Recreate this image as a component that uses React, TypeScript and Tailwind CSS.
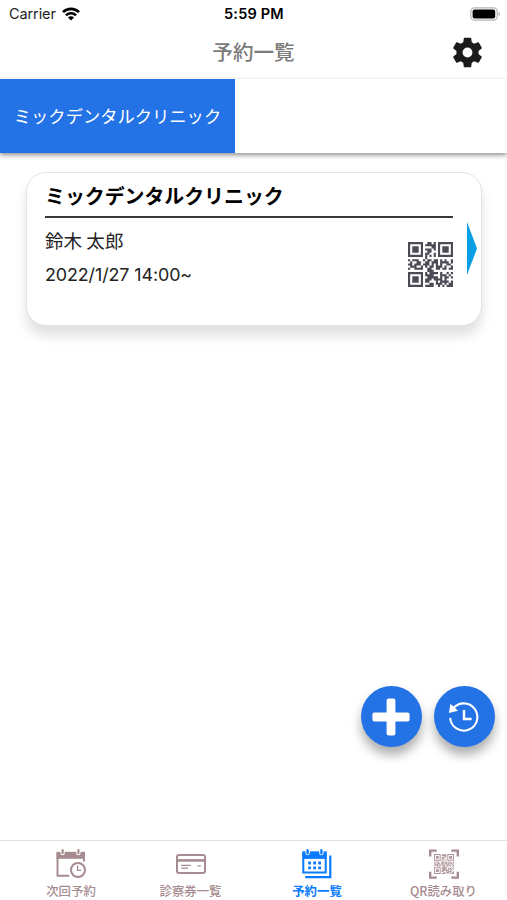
import React from "react";
import clsx from "clsx";

const CLINIC = "ミックデンタルクリニック";

const QR_ROWS = [
  "#######..##.#.#######",
  "#.....#.#####.#.....#",
  "#.###.#....##.#.###.#",
  "#.###.#.###.#.#.###.#",
  "#.###.#..##...#.###.#",
  "#.....#.##..#.#.....#",
  "#######.#.#.#.#######",
  "........#............",
  "#.###..#.##.##.#.#..#",
  ".#..##..##.###.####.#",
  "##.###.###.#.#.#..##.",
  ".###..#.#.##.###.#..#",
  "#..####..##..##.##.##",
  ".........###.........",
  "#######.#.####.#..#.#",
  "#.....#.####...###.#.",
  "#.###.#..#####.#.##.#",
  "#.###.#.###.####.#...",
  "#.###.#.##...#.####.#",
  "#.....#...##.###.#.##",
  "#######.####..#.#.###",
];

const QrCode = ({ className }) => {
  const d = QR_ROWS.map((row, y) =>
    [...row].map((c, x) => (c === "#" ? `M${x} ${y}h1v1h-1z` : "")).join("")
  ).join("");

  return (
    <svg className={className} viewBox="0 0 21 21" fill="currentColor">
      <path d={d} />
    </svg>
  );
};

const WifiIcon = () => (
  <svg className="h-[14px] w-[18px]" viewBox="0 0 18 14" fill="none">
    <path d="M1 5.2a11.3 11.3 0 0 1 16 0" stroke="#000" strokeWidth="2.6" />
    <path d="M3.9 8.3a7.2 7.2 0 0 1 10.2 0" stroke="#000" strokeWidth="2.4" />
    <path d="M9 13.6 6 10.6a4.2 4.2 0 0 1 6 0z" fill="#000" />
  </svg>
);

const BatteryIcon = () => (
  <svg className="h-[14px] w-[31px]" viewBox="0 0 31 14">
    <rect x=".8" y=".8" width="26.4" height="12.4" rx="3.6" fill="#fff" stroke="#b5b5b5" strokeWidth="1.2" />
    <rect x="2.6" y="2.4" width="22.6" height="9.2" rx="2" />
    <path d="M28.6 4.8c1.8.7 1.8 3.7 0 4.4z" fill="#aaa" />
  </svg>
);

const GearIcon = () => (
  <svg className="h-[37px] w-[37px]" viewBox="0 0 24 24" fill="#1b1b1b">
    <path d="M19.14 12.94c.04-.3.06-.61.06-.94 0-.32-.02-.64-.07-.94l2.03-1.58c.18-.14.23-.41.12-.61l-1.92-3.32c-.12-.22-.37-.29-.59-.22l-2.39.96c-.5-.38-1.03-.7-1.62-.94l-.36-2.54c-.04-.24-.24-.41-.48-.41h-3.84c-.24 0-.43.17-.47.41l-.36 2.54c-.59.24-1.13.57-1.62.94l-2.39-.96c-.22-.08-.47 0-.59.22L2.74 8.87c-.12.21-.08.47.12.61l2.03 1.58c-.05.3-.09.63-.09.94s.02.64.07.94l-2.03 1.58c-.18.14-.23.41-.12.61l1.92 3.32c.12.22.37.29.59.22l2.39-.96c.5.38 1.03.7 1.62.94l.36 2.54c.05.24.24.41.48.41h3.84c.24 0 .44-.17.47-.41l.36-2.54c.59-.24 1.13-.56 1.62-.94l2.39.96c.22.08.47 0 .59-.22l1.92-3.32c.12-.22.07-.47-.12-.61l-2.01-1.58zM12 15.2a3.2 3.2 0 1 1 0-6.4 3.2 3.2 0 0 1 0 6.4z" />
  </svg>
);

const PlusIcon = () => (
  <svg className="h-[38px] w-[38px]" viewBox="0 0 38 38" fill="#fff">
    <rect x="14.6" y=".4" width="8.8" height="37.2" rx="2" />
    <rect x=".4" y="14.6" width="37.2" height="8.8" rx="2" />
  </svg>
);

const HistoryIcon = () => (
  <svg className="h-[32px] w-[32px]" viewBox="0 0 32 32" fill="none" stroke="#fff" strokeWidth="2.1">
    <path d="M2.2 17A13.6 13.6 0 1 0 5 7.7" />
    <path d="M2.4 2.8.9 12l9.2-2.2z" fill="#fff" stroke="none" />
    <path d="M16 9v9h7.6" strokeWidth="2.4" />
  </svg>
);

const NextVisitIcon = () => (
  <svg className="h-[30px] w-[30px]" viewBox="0 0 30 30" fill="none" stroke="currentColor">
    <path d="M.5 2.8h28.4v7H.5z" fill="currentColor" stroke="none" />
    <path d="M1.5 4v22.7h11.8M28 4v8.6" strokeWidth="1.9" />
    <path d="M6.6.4v3.6M22.4.4v3.6" stroke="#fff" strokeWidth="4.4" strokeLinecap="round" />
    <path d="M6.6 1.2v3M22.4 1.2v3" strokeWidth="2.2" strokeLinecap="round" />
    <circle cx="22" cy="21" r="8.8" fill="#fff" stroke="none" />
    <circle cx="22" cy="21" r="7" strokeWidth="2" />
    <path d="M21.6 16.6v4.8h3.6" strokeWidth="1.3" />
  </svg>
);

const CardIcon = () => (
  <svg className="h-[30px] w-[30px]" viewBox="0 0 30 30" fill="none" stroke="currentColor">
    <rect x="1" y="6" width="28" height="18" rx="2" strokeWidth="2" />
    <path d="M1 11.4h28" strokeWidth="2.6" />
    <path d="M5.2 16.3h9.6M5.2 19.2h7M21.4 16.8h3.4" strokeWidth="1.2" />
  </svg>
);

const CalendarIcon = () => (
  <svg className="h-[30px] w-[30px]" viewBox="0 0 30 30" fill="none" stroke="currentColor">
    <path d="M1.3 3.6h22.4v20H1.3z" strokeWidth="2" />
    <path d="M.4 2.7h24.2v7.2H.4z" fill="currentColor" stroke="none" />
    <path d="M5.6.4v3.6M19.4.4v3.6" stroke="#fff" strokeWidth="4.4" strokeLinecap="round" />
    <path d="M5.6 1.2v3M19.4 1.2v3" strokeWidth="2.4" strokeLinecap="round" />
    <path d="M28.3 6.4v21.8H3.2" strokeWidth="2.2" />
    <path d="M6.2 14h12.8M6.2 18.9h12.8" strokeWidth="2.8" strokeDasharray="2.8 2.2" />
  </svg>
);

const ScanIcon = () => (
  <span className="relative flex h-[30px] w-[30px] items-center justify-center">
    <svg className="absolute inset-0 h-[30px] w-[30px]" viewBox="0 0 30 30" fill="none" stroke="currentColor" strokeWidth="2.4">
      <path d="M1.2 7.4V1.6h6.5M22.3 1.6h6.5v5.8M28.8 22.8v5.8h-6.5M7.7 28.6H1.2v-5.8" />
    </svg>
    <QrCode className="h-5 w-5 opacity-90" />
  </span>
);

const StatusBar = () => (
  <div className="grid h-[27px] grid-cols-3 items-center pr-[6px] pl-[9px] font-['Inter'] text-[14.5px]">
    <div className="flex items-center gap-[6px] text-[#222]">
      <span className="tracking-[-0.1px]">Carrier</span>
      <WifiIcon />
    </div>
    <span className="-ml-[2px] text-center font-semibold tracking-[0.2px]">5:59 PM</span>
    <div className="flex justify-end">
      <BatteryIcon />
    </div>
  </div>
);

const ReservationCard = ({ clinic, name, date }) => (
  <div className="relative mr-[25px] ml-[26px] mt-[19px] h-[154px] rounded-[20px] border border-[#e3e3e3] bg-white pr-7 pl-[18px] shadow-[0_10px_12px_rgba(0,0,0,0.12)]">
    <h2 className="h-[45px] border-b-[2.5px] border-[#3c383b] pt-[9px] text-[19.9px] leading-[28px] font-bold">
      {clinic}
    </h2>
    <div className="flex justify-between">
      <div className="pt-[6px] text-[#222]">
        <p className="text-[18.6px] leading-8">{name}</p>
        <p className="mt-[3px] font-['Inter'] text-[17.9px] leading-8 tracking-[-0.1px]">{date}</p>
      </div>
      <QrCode className="mt-6 h-[45px] w-[45px] text-[#4b4a55]" />
    </div>
    <svg className="absolute top-[49px] right-1 h-[53px] w-[10px]" viewBox="0 0 10 53" fill="#089fe5">
      <path d="M0 0 10 26.5 0 53z" />
    </svg>
  </div>
);

const FloatingButton = ({ children }) => (
  <button className="flex h-[61px] w-[61px] items-center justify-center rounded-full bg-[#2372e6] shadow-[0_8px_11px_rgba(0,0,0,0.32)]">
    {children}
  </button>
);

const TABS = [
  { label: "次回予約", icon: NextVisitIcon, className: "w-[127px] pl-[15px]" },
  { label: "診察券一覧", icon: CardIcon, className: "w-[127px]" },
  { label: "予約一覧", icon: CalendarIcon, className: "w-[126px]", active: true },
  { label: "QR読み取り", icon: ScanIcon, className: "w-[127px]" },
];

const TabBar = () => (
  <nav className="flex h-[60px] border-t border-[#e2e2e2] bg-white">
    {TABS.map(({ label, icon: Icon, className, active }) => (
      <button
        key={label}
        className={clsx(
          "flex flex-col items-center pt-2",
          className,
          active ? "font-bold text-[#0a7bff]" : "font-medium text-[#a68b90]"
        )}
      >
        <Icon />
        <span className="mt-[3px] text-[12.4px] leading-[18px] whitespace-nowrap">{label}</span>
      </button>
    ))}
  </nav>
);

export default function App() {
  return (
    <div className="flex h-[900px] w-[507px] flex-col overflow-hidden bg-white font-['Noto_Sans_CJK_JP',sans-serif] text-black">
      <StatusBar />
      <header className="relative z-10 grid h-[52px] grid-cols-3 items-center border-b-2 border-[#f5f5f5] bg-white">
        <h1 className="col-start-2 pb-px text-center text-[20.6px] leading-none font-medium text-[#7b7b7b]">
          予約一覧
        </h1>
        <button className="mr-[21px] justify-self-end">
          <GearIcon />
        </button>
      </header>
      <div className="flex h-[74px] shadow-[0_2px_5px_rgba(0,0,0,0.45)]">
        <button className="flex w-[235px] items-center justify-center bg-[#2372e6] text-[17.3px] text-white">
          {CLINIC}
        </button>
      </div>
      <main className="flex-1">
        <ReservationCard clinic={CLINIC} name="鈴木 太郎" date="2022/1/27 14:00~" />
      </main>
      <div className="mb-[93px] flex justify-end gap-3 pr-[12.5px]">
        <FloatingButton>
          <PlusIcon />
        </FloatingButton>
        <FloatingButton>
          <HistoryIcon />
        </FloatingButton>
      </div>
      <TabBar />
    </div>
  );
}
